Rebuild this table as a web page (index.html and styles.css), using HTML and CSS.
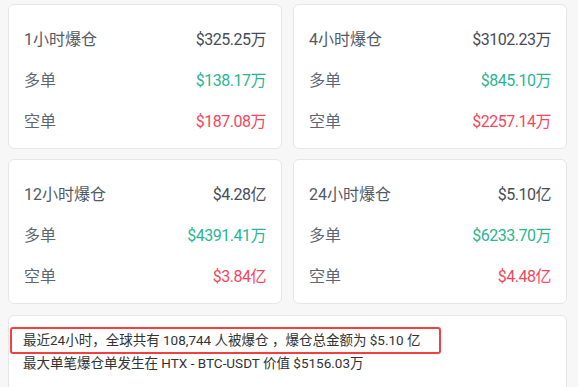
FILE: index.html
```html
<!DOCTYPE html>
<html lang="zh-CN">
<head>
<meta charset="utf-8">
<link rel="stylesheet" href="styles.css">
</head>
<body>
<div class="page">
  <div class="grid">
    <div class="card">
      <div class="row"><span class="title">1小时爆仓</span><span class="val total">$325.25万</span></div>
      <div class="row"><span class="label">多单</span><span class="val long">$138.17万</span></div>
      <div class="row"><span class="label">空单</span><span class="val short">$187.08万</span></div>
    </div>
    <div class="card">
      <div class="row"><span class="title">4小时爆仓</span><span class="val total">$3102.23万</span></div>
      <div class="row"><span class="label">多单</span><span class="val long">$845.10万</span></div>
      <div class="row"><span class="label">空单</span><span class="val short">$2257.14万</span></div>
    </div>
    <div class="card">
      <div class="row"><span class="title">12小时爆仓</span><span class="val total">$4.28亿</span></div>
      <div class="row"><span class="label">多单</span><span class="val long">$4391.41万</span></div>
      <div class="row"><span class="label">空单</span><span class="val short">$3.84亿</span></div>
    </div>
    <div class="card">
      <div class="row"><span class="title">24小时爆仓</span><span class="val total">$5.10亿</span></div>
      <div class="row"><span class="label">多单</span><span class="val long">$6233.70万</span></div>
      <div class="row"><span class="label">空单</span><span class="val short">$4.48亿</span></div>
    </div>
  </div>
  <div class="summary">
    <div class="highlight">最近24小时，全球共有 108,744 人被爆仓 ，爆仓总金额为 $5.10 亿</div>
    <div class="line">最大单笔爆仓单发生在 HTX - BTC-USDT 价值 $5156.03万</div>
  </div>
</div>
</body>
</html>
```
FILE: styles.css
```css
html, body {
  margin: 0;
  padding: 0;
  background: #f7f7f7;
}
body {
  font-family: Roboto, "Noto Sans CJK SC", sans-serif;
  color: #474d57;
}
.page {
  padding: 4px 11px 0 8px;
}
.grid {
  display: grid;
  grid-template-columns: 274px 274px;
  column-gap: 11px;
  row-gap: 10px;
}
.card {
  background: #fff;
  border: 1px solid #e6e6e6;
  border-radius: 6px;
  padding: 12px 15px 8px 15px;
  height: 145px;
  box-sizing: border-box;
}
.row {
  display: flex;
  justify-content: space-between;
  align-items: center;
  height: 41px;
  font-size: 16px;
}
.title {
  color: #525a66;
}
.label {
  color: #5e6673;
}
.val {
  font-size: 16px;
  letter-spacing: -0.5px;
}
.total { color: #474d57; }
.long { color: #2bb592; }
.short { color: #f6465d; }
.summary {
  margin-top: 11px;
  background: #fff;
  border: 1px solid #e6e6e6;
  border-radius: 6px;
  padding: 11px 12px 20px 1px;
  height: 90px;
  box-sizing: border-box;
  font-size: 13.5px;
  color: #333;
}
.highlight {
  display: inline-block;
  border: 2px solid #f23f3f;
  border-radius: 3px;
  padding: 1px 18px 1px 11px;
  line-height: 21px;
}
.line {
  margin-top: -2px;
  padding-left: 13px;
  line-height: 22px;
}
```
